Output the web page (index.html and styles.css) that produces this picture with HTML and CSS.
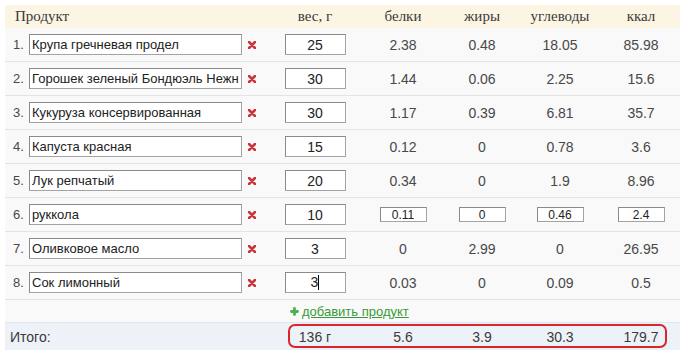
FILE: index.html
```html
<!DOCTYPE html>
<html lang="ru">
<head>
<meta charset="utf-8">
<title>Калькулятор</title>
<link rel="stylesheet" href="styles.css">
</head>
<body>
<div class="calc">
  <div class="row head">
    <div class="c name">Продукт</div>
    <div class="c">вес, г</div>
    <div class="c">белки</div>
    <div class="c">жиры</div>
    <div class="c">углеводы</div>
    <div class="c">ккал</div>
  </div>

  <div class="row item">
    <div class="c name"><span class="num">1.</span><input class="pname" value="Крупа гречневая продел"><span class="del"><svg width="8" height="8" viewBox="0 0 8 8"><path d="M1 1L7 7M7 1L1 7"/></svg></span></div>
    <div class="c"><input class="weight" value="25"></div>
    <div class="c">2.38</div><div class="c">0.48</div><div class="c">18.05</div><div class="c">85.98</div>
  </div>

  <div class="row item">
    <div class="c name"><span class="num">2.</span><input class="pname" value="Горошек зеленый Бондюэль Нежный"><span class="del"><svg width="8" height="8" viewBox="0 0 8 8"><path d="M1 1L7 7M7 1L1 7"/></svg></span></div>
    <div class="c"><input class="weight" value="30"></div>
    <div class="c">1.44</div><div class="c">0.06</div><div class="c">2.25</div><div class="c">15.6</div>
  </div>

  <div class="row item">
    <div class="c name"><span class="num">3.</span><input class="pname" value="Кукуруза консервированная"><span class="del"><svg width="8" height="8" viewBox="0 0 8 8"><path d="M1 1L7 7M7 1L1 7"/></svg></span></div>
    <div class="c"><input class="weight" value="30"></div>
    <div class="c">1.17</div><div class="c">0.39</div><div class="c">6.81</div><div class="c">35.7</div>
  </div>

  <div class="row item">
    <div class="c name"><span class="num">4.</span><input class="pname" value="Капуста красная"><span class="del"><svg width="8" height="8" viewBox="0 0 8 8"><path d="M1 1L7 7M7 1L1 7"/></svg></span></div>
    <div class="c"><input class="weight" value="15"></div>
    <div class="c">0.12</div><div class="c">0</div><div class="c">0.78</div><div class="c">3.6</div>
  </div>

  <div class="row item">
    <div class="c name"><span class="num">5.</span><input class="pname" value="Лук репчатый"><span class="del"><svg width="8" height="8" viewBox="0 0 8 8"><path d="M1 1L7 7M7 1L1 7"/></svg></span></div>
    <div class="c"><input class="weight" value="20"></div>
    <div class="c">0.34</div><div class="c">0</div><div class="c">1.9</div><div class="c">8.96</div>
  </div>

  <div class="row item">
    <div class="c name"><span class="num">6.</span><input class="pname" value="руккола"><span class="del"><svg width="8" height="8" viewBox="0 0 8 8"><path d="M1 1L7 7M7 1L1 7"/></svg></span></div>
    <div class="c"><input class="weight" value="10"></div>
    <div class="c"><input class="mini" value="0.11"></div>
    <div class="c"><input class="mini" value="0"></div>
    <div class="c"><input class="mini" value="0.46"></div>
    <div class="c"><input class="mini" value="2.4"></div>
  </div>

  <div class="row item">
    <div class="c name"><span class="num">7.</span><input class="pname" value="Оливковое масло"><span class="del"><svg width="8" height="8" viewBox="0 0 8 8"><path d="M1 1L7 7M7 1L1 7"/></svg></span></div>
    <div class="c"><input class="weight" value="3"></div>
    <div class="c">0</div><div class="c">2.99</div><div class="c">0</div><div class="c">26.95</div>
  </div>

  <div class="row item">
    <div class="c name"><span class="num">8.</span><input class="pname" value="Сок лимонный"><span class="del"><svg width="8" height="8" viewBox="0 0 8 8"><path d="M1 1L7 7M7 1L1 7"/></svg></span></div>
    <div class="c"><div class="weight field">3<span class="caret"></span></div></div>
    <div class="c">0.03</div><div class="c">0</div><div class="c">0.09</div><div class="c">0.5</div>
  </div>

  <div class="row add">
    <a class="addlink" href="#"><svg class="plus" width="9" height="9" viewBox="0 0 9 9"><path d="M4.5 1.5V7.5M1.5 4.5H7.5"/></svg><span>добавить продукт</span></a>
  </div>

  <div class="row total">
    <div class="c name">Итого:</div>
    <div class="c">136 г</div>
    <div class="c">5.6</div>
    <div class="c">3.9</div>
    <div class="c">30.3</div>
    <div class="c">179.7</div>
    <div class="hl"></div>
  </div>
</div>
</body>
</html>
```

FILE: styles.css
```css
html, body {
  margin: 0;
  background: #ffffff;
}
body {
  font-family: "Liberation Sans", Arial, sans-serif;
  color: #333333;
}
.calc {
  padding: 5px 3px 0 5px;
}
.row {
  display: grid;
  grid-template-columns: 265px 90px 86px 72px 84px 78px;
  align-items: center;
}
.c {
  text-align: center;
}
.head {
  height: 23px;
  background: #fdf5e3;
  font-family: "Liberation Serif", "Times New Roman", serif;
  font-size: 15px;
  color: #3a3a3a;
}
.head .name {
  text-align: left;
  padding-left: 10px;
}
.item {
  height: 33px;
  background: #f9f9f9;
  border-bottom: 1px solid #e3e3e3;
  font-size: 14px;
  color: #484848;
}
.item .name {
  display: flex;
  align-items: center;
  padding-left: 8px;
  text-align: left;
}
.num {
  width: 16px;
  font-size: 13px;
  color: #484848;
}
input {
  margin: 0;
  font-family: "Liberation Sans", Arial, sans-serif;
  color: #222222;
  background: #ffffff;
  box-sizing: border-box;
  outline: none;
}
.pname {
  width: 213px;
  height: 21px;
  padding: 0 2px;
  font-size: 13px;
  border: 1px solid #a3a3a3;
  border-top-color: #8a8a8a;
  border-left-color: #8a8a8a;
}
.del {
  display: flex;
  margin-left: 6px;
}
.del svg path {
  stroke: #c8363c;
  stroke-width: 2.6;
  stroke-linecap: round;
  fill: none;
}
.weight {
  display: block;
  margin: 0 auto;
  width: 61px;
  height: 21px;
  padding: 0;
  text-align: center;
  font-size: 14px;
  border: 1px solid #a3a3a3;
  border-top-color: #8a8a8a;
  border-left-color: #8a8a8a;
  box-sizing: border-box;
  background: #ffffff;
  color: #222222;
}
.field {
  line-height: 19px;
  font-family: "Liberation Sans", Arial, sans-serif;
}
.caret {
  display: inline-block;
  width: 1px;
  height: 15px;
  background: #000000;
  vertical-align: -3px;
}
.mini {
  display: block;
  margin: 0 auto;
  width: 47px;
  height: 15px;
  padding: 0;
  text-align: center;
  font-size: 12px;
  border: 1px solid #a3a3a3;
  border-top-color: #8a8a8a;
  border-left-color: #8a8a8a;
}
.add {
  display: flex;
  height: 22px;
  background: #f9f9f9;
  padding-left: 285px;
}
.addlink {
  display: flex;
  align-items: center;
  gap: 3px;
  font-size: 13px;
  color: #3a9a3a;
  text-decoration: underline;
}
.plus path {
  stroke: #4caf50;
  stroke-width: 2.8;
  stroke-linecap: round;
  fill: none;
}
.total {
  position: relative;
  height: 28px;
  background: #edf2f9;
  border-top: 1px solid #e0e6ef;
  font-size: 14px;
  color: #3a3a3a;
}
.total .name {
  text-align: left;
  padding-left: 5px;
}
.hl {
  position: absolute;
  left: 283px;
  top: 1px;
  width: 379px;
  height: 24px;
  box-sizing: border-box;
  border: 2px solid #d9262c;
  border-radius: 7px;
}
```
